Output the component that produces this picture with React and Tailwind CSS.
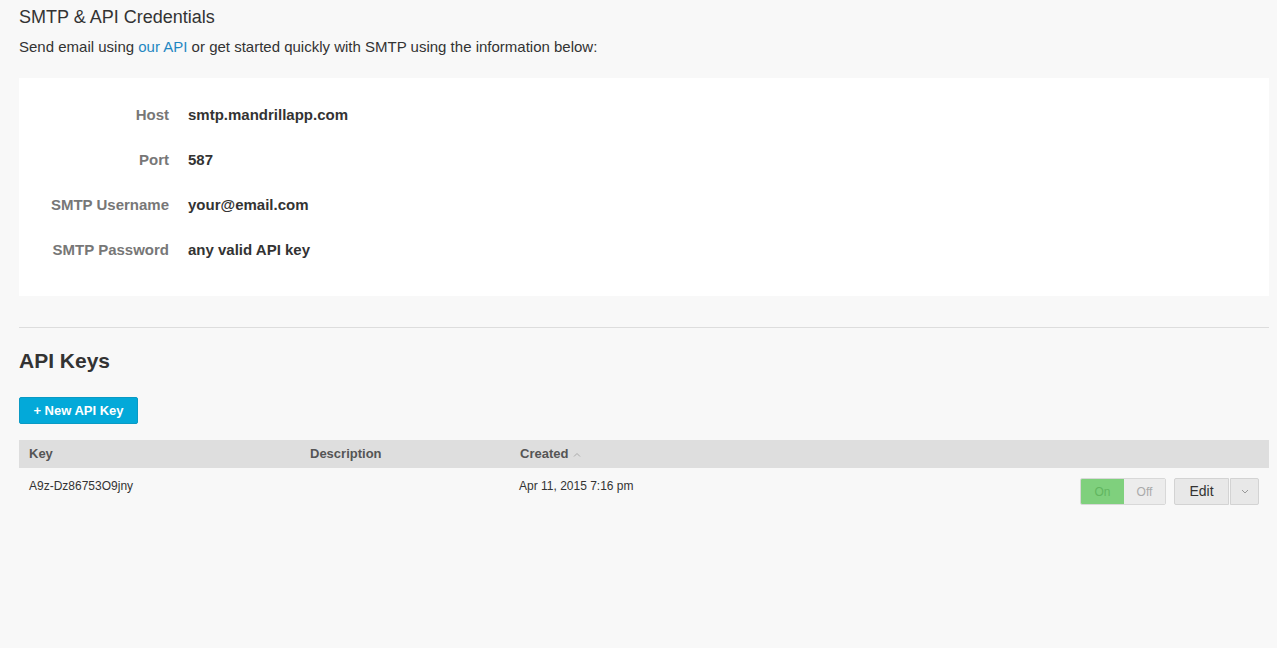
import React from "react";

const font = { fontFamily: '"Liberation Sans", Arial, sans-serif' };

export default function App() {
  return (
    <div className="min-h-[648px] bg-[#f8f8f8] pl-[19px] pr-[8px] pt-[6px] text-[#333]" style={font}>
      <h2 className="text-[18px] leading-[22px] text-[#333]">SMTP &amp; API Credentials</h2>
      <p className="mt-[10px] text-[15px] leading-[18px] text-[#333]">
        Send email using <a className="text-[#1f87c2]">our API</a> or get started quickly with SMTP using the information below:
      </p>
      <div className="mt-[22px] h-[218px] bg-white pt-[15px]">
        {[
          ["Host", "smtp.mandrillapp.com"],
          ["Port", "587"],
          ["SMTP Username", "your@email.com"],
          ["SMTP Password", "any valid API key"],
        ].map(([k, v]) => (
          <div key={k} className="flex h-[45px] items-center text-[15px] font-bold">
            <div className="w-[150px] text-right text-[#777]">{k}</div>
            <div className="ml-[19px] text-[#333]">{v}</div>
          </div>
        ))}
      </div>
      <div className="mt-[31px] h-px bg-[#dddddd]" />
      <h1 className="mt-[19px] text-[21px] font-bold leading-[28px] text-[#333]">API Keys</h1>
      <button className="mt-[22px] flex h-[27px] w-[119px] items-center justify-center rounded-[2px] border border-[#0a9ac4] bg-[#03a9d9] text-[13px] font-bold text-white">
        + New API Key
      </button>
      <div className="mt-[16px] flex h-[28px] items-center bg-[#dedede] text-[13px] font-bold text-[#555]">
        <div className="w-[291px] pl-[10px]">Key</div>
        <div className="w-[210px]">Description</div>
        <div className="flex items-center gap-[5px]">
          Created
          <svg width="8" height="5" viewBox="0 0 8 5" className="mt-[1px]">
            <path d="M1 4.5 L4 1.5 L7 4.5" fill="none" stroke="#aaa" strokeWidth="1" />
          </svg>
        </div>
      </div>
      <div className="flex h-[45px] items-start text-[12px] text-[#333]">
        <div className="w-[290px] pl-[10px] pt-[9px]">A9z-Dz86753O9jny</div>
        <div className="w-[210px]" />
        <div className="pt-[9px]">Apr 11, 2015 7:16 pm</div>
        <div className="ml-auto mr-[10px] mt-[10px] flex items-center">
          <div className="flex h-[27px] overflow-hidden rounded-[2px] border border-[#d8d8d8] text-[12px]">
            <div className="flex w-[43px] items-center justify-center bg-[#7fd07d] text-[#62b660]">On</div>
            <div className="flex w-[41px] items-center justify-center bg-[#ececec] text-[#aaa]">Off</div>
          </div>
          <div className="ml-[8px] flex h-[27px] w-[55px] items-center justify-center rounded-l-[2px] border border-[#d3d3d3] bg-[#e8e8e8] text-[14px] text-[#333]">
            Edit
          </div>
          <div className="ml-[1px] flex h-[27px] w-[29px] items-center justify-center rounded-r-[2px] border border-[#d3d3d3] bg-[#e8e8e8]">
            <svg width="8" height="5" viewBox="0 0 8 5">
              <path d="M1 1 L4 4 L7 1" fill="none" stroke="#999" strokeWidth="1" />
            </svg>
          </div>
        </div>
      </div>
    </div>
  );
}
